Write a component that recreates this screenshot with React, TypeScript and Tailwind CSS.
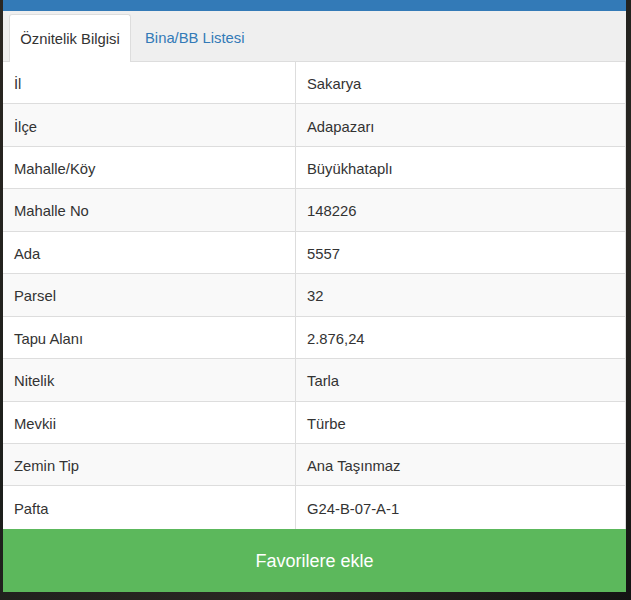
const rows: [string, string][] = [
  ["İl", "Sakarya"],
  ["İlçe", "Adapazarı"],
  ["Mahalle/Köy", "Büyükhataplı"],
  ["Mahalle No", "148226"],
  ["Ada", "5557"],
  ["Parsel", "32"],
  ["Tapu Alanı", "2.876,24"],
  ["Nitelik", "Tarla"],
  ["Mevkii", "Türbe"],
  ["Zemin Tip", "Ana Taşınmaz"],
  ["Pafta", "G24-B-07-A-1"],
]

export default function App() {
  return (
    <div
      className="w-[631px] h-[600px] overflow-hidden bg-[linear-gradient(135deg,#2b2722_0%,#1d1f1c_40%,#2a2722_70%,#141414_100%)] px-[3px] pr-[5px] text-[#333] text-[14.8px]"
      style={{ fontFamily: '"Liberation Sans", Arial, sans-serif' }}
    >
      <div className="flex flex-col">
        <div className="h-[11px] bg-[#337ab7]" />

        <div className="flex h-[51px] items-end bg-[#efefef] border-b border-[#ddd] pl-[6px]">
          <div className="-mb-px flex h-[48px] w-[122px] items-center justify-center pt-[2px] rounded-t-[3px] border border-b-0 border-[#ddd] bg-white">
            Öznitelik Bilgisi
          </div>
          <div className="flex h-[48px] items-center pt-[2px] pl-[14px] text-[#337ab7]">Bina/BB Listesi</div>
        </div>

        <div className="border-r border-[#ddd] bg-white">
          {rows.map(([k, v], i) => (
            <div
              key={k}
              className={`grid grid-cols-[293px_1fr] h-[42.45px] border-b border-[#ddd] last:border-b-0 ${
                i % 2 === 1 ? "bg-[#f9f9f9]" : "bg-white"
              }`}
            >
              <div className="flex items-center pt-[3px] pl-[11px] border-r border-[#ddd]">{k}</div>
              <div className="flex items-center pt-[3px] pl-[11px]">{v}</div>
            </div>
          ))}
        </div>

        <button className="h-[63px] w-full bg-[#5cb85c] pt-[3px] text-white text-[18px]">Favorilere ekle</button>
      </div>
    </div>
  )
}
